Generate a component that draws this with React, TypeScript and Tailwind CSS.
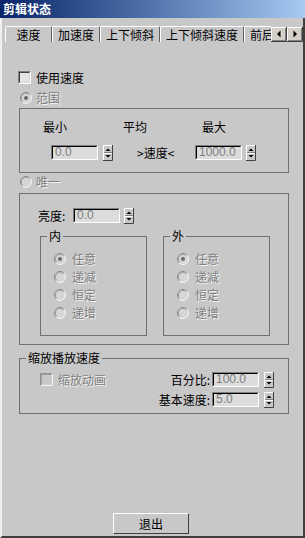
import React from "react";

const DIS = "text-[#808080] [text-shadow:1px_1px_0_#f4f4f4]";

function Radio({ checked }: { checked?: boolean }) {
  return (
    <svg width="12" height="12" viewBox="0 0 12 12" className="shrink-0">
      <circle cx="6" cy="6" r="5.5" fill="#d6d6d6" stroke="#f4f4f4" />
      <path d="M2.1 9.9 A5.5 5.5 0 0 1 9.9 2.1" fill="none" stroke="#808080" />
      <path d="M2.8 9.2 A4.5 4.5 0 0 1 9.2 2.8" fill="none" stroke="#a4a4a4" />
      {checked && <circle cx="6" cy="6" r="2" fill="#6a6a6a" />}
    </svg>
  );
}

function Check({ disabled }: { disabled?: boolean }) {
  return disabled ? (
    <div className="w-[13px] h-[13px] shrink-0 border border-t-[#909090] border-l-[#909090] border-b-[#f0f0f0] border-r-[#f0f0f0]">
      <div className="w-full h-full border border-t-[#a0a0a0] border-l-[#a0a0a0] border-b-[#d0d0d0] border-r-[#d0d0d0] bg-[#c8c8c8]" />
    </div>
  ) : (
    <div className="w-[13px] h-[13px] shrink-0 border border-t-[#808080] border-l-[#808080] border-b-white border-r-white">
      <div className="w-full h-full border border-t-[#404040] border-l-[#404040] border-b-[#d8d8d8] border-r-[#d8d8d8] bg-[#e4e4e4]" />
    </div>
  );
}

function Field({ value }: { value: string }) {
  return (
    <div className="w-[47px] h-[15px] shrink-0 border border-t-[#808080] border-l-[#808080] border-b-white border-r-white">
      <div className="h-full border border-t-black border-l-black border-b-[#dcdcdc] border-r-[#dcdcdc] bg-[#dcdcdc] text-[#7c7c7c] text-[12px] leading-[11px] pl-[2px] font-['Liberation_Sans',sans-serif] overflow-hidden whitespace-nowrap">
        {value}
      </div>
    </div>
  );
}

function Spin() {
  return (
    <svg width="10" height="16" viewBox="0 0 10 16" className="shrink-0">
      <rect x="0" y="0" width="10" height="16" fill="#c8c8c8" />
      <path d="M0.5 15.5 V0.5 H9.5" stroke="#ffffff" fill="none" />
      <path d="M0 15.5 H9.5 V0" stroke="#404040" fill="none" />
      <path d="M1 7.5 H9" stroke="#808080" />
      <path d="M1 8.5 H9" stroke="#ffffff" />
      <polygon points="2.5,6 5,3.5 7.5,6" fill="#000" />
      <polygon points="2.5,10 7.5,10 5,12.5" fill="#000" />
    </svg>
  );
}

function Group({
  label,
  className,
  children,
}: {
  label?: string;
  className: string;
  children?: React.ReactNode;
}) {
  return (
    <div className={`relative shrink-0 border border-[#707070] ${className}`}>
      {label && (
        <span className="absolute left-[6px] top-[-8px] px-[2px] bg-[#c8c8c8] text-[12px] leading-[14px] text-black whitespace-nowrap">
          {label}
        </span>
      )}
      {children}
    </div>
  );
}

function Tab({ w, children }: { w: string; children: React.ReactNode }) {
  return (
    <div
      className={`${w} shrink-0 h-[16px] border-t border-l border-t-white border-l-white border-r border-r-[#606060] rounded-t-[2px] flex items-center justify-center text-[12px] leading-[14px] text-black whitespace-nowrap`}
    >
      {children}
    </div>
  );
}

function ArrowBtn({ dir }: { dir: "l" | "r" }) {
  return (
    <svg width="16" height="15" viewBox="0 0 16 15" className="shrink-0">
      <rect x="0" y="0" width="16" height="15" fill="#d4d0c8" />
      <path d="M0.5 14.5 V0.5 H15.5" stroke="#ffffff" fill="none" />
      <path d="M0 14.5 H15.5 V0" stroke="#404040" fill="none" />
      <path d="M1 13.5 H14.5 V1" stroke="#808080" fill="none" />
      {dir === "l" ? (
        <polygon points="9.5,3.5 9.5,10.5 6,7" fill="#000" />
      ) : (
        <polygon points="6.5,3.5 6.5,10.5 10,7" fill="#000" />
      )}
    </svg>
  );
}

export default function App() {
  return (
    <div className="w-[305px] h-[538px] flex flex-col bg-[#c8c8c8] overflow-hidden font-['Noto_Sans_CJK_SC',sans-serif] text-[12px] text-black">
      <div className="h-[18px] shrink-0 bg-linear-to-r from-[#0a246a] to-[#a6caf0] pl-[3px] text-white font-bold text-[12px] leading-[18px]">
        剪辑状态
      </div>
      <div className="flex-1 flex flex-col border-l-2 border-l-[#f0f0f0] border-r-2 border-r-[#404040] border-b-2 border-b-[#404040]">
        {/* tabs */}
        <div className="flex mt-[8px] h-[16px] pl-[3px] shrink-0">
          <div className="flex flex-1 overflow-hidden">
            <Tab w="w-[47px]">速度</Tab>
            <Tab w="w-[48px]">加速度</Tab>
            <Tab w="w-[60px]">上下倾斜</Tab>
            <Tab w="w-[84px]">上下倾斜速度</Tab>
            <Tab w="w-[60px]">前后倾斜</Tab>
          </div>
          <div className="flex mt-[1px]">
            <ArrowBtn dir="l" />
            <ArrowBtn dir="r" />
          </div>
        </div>

        <div className="flex items-center h-[13px] mt-[29px] ml-[16px] gap-[5px] shrink-0">
          <Check />
          <span className="leading-[13px]">使用速度</span>
        </div>
        <div className="flex items-center h-[12px] mt-[8px] ml-[18px] gap-[4px] shrink-0">
          <Radio checked />
          <span className={`leading-[12px] ${DIS}`}>范围</span>
        </div>

        <Group className="mt-[4px] ml-[17px] w-[270px] h-[65px]">
          <div className="flex pt-[11px] pl-[23px] h-[25px] leading-[14px]">
            <span className="w-[80px]">最小</span>
            <span className="w-[79px]">平均</span>
            <span>最大</span>
          </div>
          <div className="flex items-center h-[15px] mt-[11px] pl-[31px]">
            <Field value="0.0" />
            <div className="ml-[5px]">
              <Spin />
            </div>
            <span className="ml-[24px] w-[58px] leading-[14px] whitespace-nowrap">{">速度<"}</span>
            <Field value="1000.0" />
            <div className="ml-[4px]">
              <Spin />
            </div>
          </div>
        </Group>

        <div className="flex items-center h-[12px] mt-[3px] ml-[18px] gap-[4px] shrink-0">
          <Radio />
          <span className={`leading-[12px] ${DIS}`}>唯一</span>
        </div>

        <Group className="mt-[5px] ml-[17px] w-[270px] h-[152px]">
          <div className="flex items-center h-[15px] mt-[14px] pl-[18px]">
            <span className="w-[35px] leading-[14px] whitespace-nowrap">亮度:</span>
            <Field value="0.0" />
            <div className="ml-[4px]">
              <Spin />
            </div>
          </div>
          <div className="flex gap-[16px] mt-[13px] pl-[20px]">
            {["内", "外"].map((lbl) => (
              <Group key={lbl} label={lbl} className="w-[107px] h-[100px]">
                <div className="flex flex-col pt-[13px] pl-[13px]">
                  {["任意", "递减", "恒定", "递增"].map((t, i) => (
                    <div key={t} className="flex items-center h-[18px] gap-[6px]">
                      <Radio checked={i === 0} />
                      <span className={`leading-[14px] ${DIS}`}>{t}</span>
                    </div>
                  ))}
                </div>
              </Group>
            ))}
          </div>
        </Group>

        <Group label="缩放播放速度" className="mt-[13px] ml-[17px] w-[270px] h-[56px]">
          <div className="flex pt-[13px] pr-[14px]">
            <div className="flex items-center h-[15px] ml-[20px] gap-[5px]">
              <Check disabled />
              <span className={`leading-[14px] ${DIS}`}>缩放动画</span>
            </div>
            <div className="ml-auto flex flex-col gap-[5px]">
              <div className="flex items-center justify-end h-[15px]">
                <span className="leading-[14px] whitespace-nowrap">百分比:</span>
                <div className="ml-[2px]">
                  <Field value="100.0" />
                </div>
                <div className="ml-[5px]">
                  <Spin />
                </div>
              </div>
              <div className="flex items-center justify-end h-[15px]">
                <span className="leading-[14px] whitespace-nowrap">基本速度:</span>
                <div className="ml-[2px]">
                  <Field value="5.0" />
                </div>
                <div className="ml-[5px]">
                  <Spin />
                </div>
              </div>
            </div>
          </div>
        </Group>

        <div className="flex-1 flex items-end">
          <button className="ml-[111px] mb-[2px] w-[76px] h-[21px] border border-t-white border-l-white border-b-[#404040] border-r-[#404040] bg-[#c8c8c8] text-[12px] leading-[14px] text-black flex items-center justify-center">
            退出
          </button>
        </div>
      </div>
    </div>
  );
}
